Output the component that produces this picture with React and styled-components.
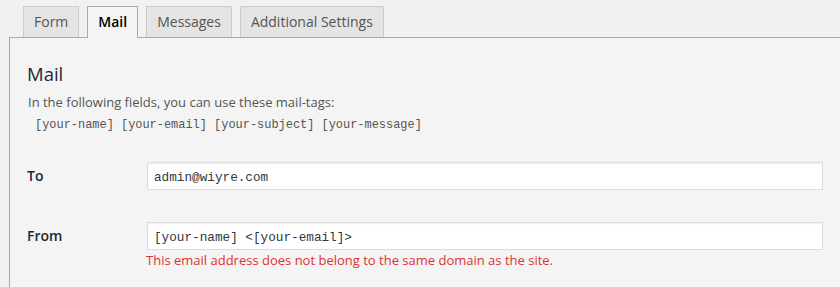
import React from 'react';
import styled, { createGlobalStyle } from 'styled-components';

const GlobalStyle = createGlobalStyle`
  html, body {
    margin: 0;
    padding: 0;
    background: #f1f1f1;
  }
  body {
    font-family: 'Open Sans', 'Noto Sans', sans-serif;
    color: #444;
  }
  #root {
    height: 287px;
    overflow: hidden;
  }
`;

const tabs = ['Form', 'Mail', 'Messages', 'Additional Settings'];

export default function App() {
  return (
    <>
      <GlobalStyle />
      <Wrap>
        <TabBar>
          {tabs.map((t) => (
            <Tab key={t} active={t === 'Mail'}>
              {t}
            </Tab>
          ))}
        </TabBar>
        <Panel>
          <Title>Mail</Title>
          <Hint>In the following fields, you can use these mail-tags:</Hint>
          <Tags>[your-name] [your-email] [your-subject] [your-message]</Tags>
          <Fields>
            <Row>
              <Label>To</Label>
              <Field>
                <Input readOnly value='admin@wiyre.com' />
              </Field>
            </Row>
            <Row>
              <Label>From</Label>
              <Field>
                <Input readOnly value='[your-name] <[your-email]>' />
                <Error>This email address does not belong to the same domain as the site.</Error>
              </Field>
            </Row>
          </Fields>
        </Panel>
      </Wrap>
    </>
  );
}

const Wrap = styled.div`
  margin-left: 9px;
  padding-top: 6px;
`;

const TabBar = styled.div`
  display: flex;
  gap: 8px;
  padding-left: 14px;
  position: relative;
  z-index: 1;
`;

const Tab = styled.div`
  border: 1px solid ${({ active }) => (active ? '#aaa' : '#ccc')};
  border-bottom: none;
  background: ${({ active }) => (active ? '#f4f4f4' : '#e4e4e4')};
  color: ${({ active }) => (active ? '#000' : '#555')};
  font-size: 14px;
  font-weight: ${({ active }) => (active ? 600 : 400)};
  line-height: 22px;
  padding: 4px 10px ${({ active }) => (active ? '5px' : '4px')};
  margin-bottom: ${({ active }) => (active ? '-1px' : '0')};
`;

const Panel = styled.div`
  background: #f4f4f4;
  border-top: 1px solid #aaa;
  border-left: 1px solid #aaa;
  padding: 24px 17px 40px 17px;
  min-height: 260px;
`;

const Title = styled.h2`
  margin: 0;
  font-size: 18.5px;
  font-weight: 400;
  line-height: 23px;
  color: #23282d;
`;

const Hint = styled.p`
  margin: 8px 0 0 1px;
  font-size: 13px;
  line-height: 19px;
  color: #555;
`;

const Tags = styled.div`
  margin-top: 3px;
  padding-left: 8px;
  font-family: 'Liberation Mono', 'DejaVu Sans Mono', monospace;
  font-size: 11.95px;
  line-height: 20px;
  color: #555;
`;

const Fields = styled.div`
  margin-top: 27px;
  display: flex;
  flex-direction: column;
  gap: 32px;
`;

const Row = styled.div`
  display: grid;
  grid-template-columns: 120px 1fr;
  align-items: start;
`;

const Label = styled.div`
  font-size: 14px;
  font-weight: 600;
  line-height: 28px;
  color: #23282d;
`;

const Field = styled.div`
  display: flex;
  flex-direction: column;
`;

const Input = styled.input`
  box-sizing: border-box;
  width: 100%;
  height: 28px;
  margin: 0;
  padding: 2px 6px 0;
  border: 1px solid #ddd;
  background: #fff;
  box-shadow: inset 0 1px 2px rgba(0, 0, 0, 0.07);
  font-family: 'Liberation Mono', 'DejaVu Sans Mono', monospace;
  font-size: 12.7px;
  color: #32373c;
  outline: none;
`;

const Error = styled.span`
  margin-top: 1px;
  margin-left: -1px;
  font-size: 13px;
  line-height: 18px;
  color: #dc3232;
`;
